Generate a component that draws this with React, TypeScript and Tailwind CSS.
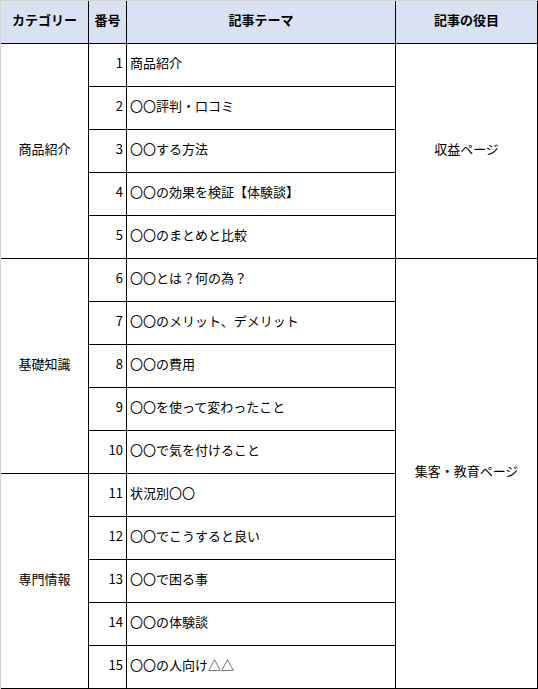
const groups = [
  {
    category: "商品紹介",
    rows: [
      { no: 1, theme: "商品紹介" },
      { no: 2, theme: "〇〇評判・口コミ" },
      { no: 3, theme: "〇〇する方法" },
      { no: 4, theme: "〇〇の効果を検証【体験談】" },
      { no: 5, theme: "〇〇のまとめと比較" },
    ],
  },
  {
    category: "基礎知識",
    rows: [
      { no: 6, theme: "〇〇とは？何の為？" },
      { no: 7, theme: "〇〇のメリット、デメリット" },
      { no: 8, theme: "〇〇の費用" },
      { no: 9, theme: "〇〇を使って変わったこと" },
      { no: 10, theme: "〇〇で気を付けること" },
    ],
  },
  {
    category: "専門情報",
    rows: [
      { no: 11, theme: "状況別〇〇" },
      { no: 12, theme: "〇〇でこうすると良い" },
      { no: 13, theme: "〇〇で困る事" },
      { no: 14, theme: "〇〇の体験談" },
      { no: 15, theme: "〇〇の人向け△△" },
    ],
  },
];

const cell = "border-r border-b border-black flex items-center pb-[6px]";

export default function App() {
  return (
    <div
      className="w-[538px] h-[689px] bg-white text-[13px] text-black leading-none"
      style={{ fontFamily: '"Noto Sans CJK JP", "Noto Sans", sans-serif' }}
    >
      <div className="grid grid-cols-[88px_38px_269px_142px] auto-rows-[43px] border-l border-t border-[#d4d4d4]">
        {/* header */}
        <div className={`${cell} justify-center bg-[#d9e1f2] font-bold`}>カテゴリー</div>
        <div className={`${cell} justify-center bg-[#d9e1f2] font-bold`}>番号</div>
        <div className={`${cell} justify-center bg-[#d9e1f2] font-bold`}>記事テーマ</div>
        <div className={`${cell} justify-center bg-[#d9e1f2] font-bold`}>記事の役目</div>

        {groups.map((g, gi) => (
          <div key={g.category} className="contents">
            <div className={`${cell} justify-center col-start-1 row-span-5`}>{g.category}</div>
            {g.rows.map((r, ri) => (
              <div key={r.no} className="contents">
                <div className={`${cell} justify-end pr-[3px] col-start-2`}>{r.no}</div>
                <div className={`${cell} justify-start pl-[3px] col-start-3`}>{r.theme}</div>
                {gi === 0 && ri === 0 && (
                  <div className={`${cell} justify-center col-start-4 row-span-5`}>収益ページ</div>
                )}
                {gi === 1 && ri === 0 && (
                  <div className={`${cell} justify-center col-start-4 row-span-10`}>集客・教育ページ</div>
                )}
              </div>
            ))}
          </div>
        ))}
      </div>
    </div>
  );
}
